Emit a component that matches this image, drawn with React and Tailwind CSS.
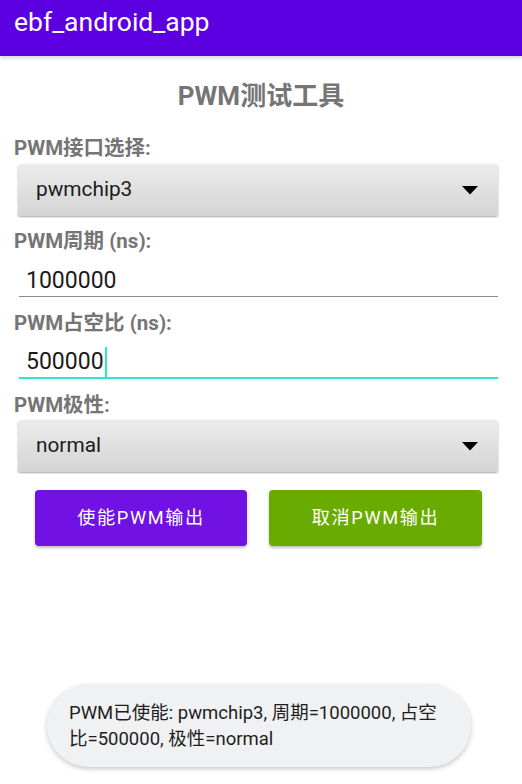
import React from "react";

const LATIN = "font-['Roboto','Noto_Sans_CJK_SC',sans-serif]";

function Label({ children, className = "" }) {
  return (
    <div
      className={`pl-[14px] text-[20.5px] leading-[28px] font-bold text-[#757575] ${className}`}
    >
      {children}
    </div>
  );
}

function Spinner({ value, className = "" }) {
  return (
    <div
      className={`mx-[18px] w-[480px] h-[52px] flex items-center justify-between rounded-[2px] bg-gradient-to-b from-[#ececec] to-[#d4d4d4] shadow-[0_1px_2px_rgba(0,0,0,0.35)] ${className}`}
    >
      <span className="pl-[18px] text-[20.8px] text-[#1b1b1b]">{value}</span>
      <svg width="16" height="9" viewBox="0 0 16 9" className="mr-[20px]">
        <polygon points="0,0 16,0 8,8.5" fill="#000" />
      </svg>
    </div>
  );
}

export default function App() {
  return (
    <div className={`relative w-[522px] h-[784px] bg-white overflow-hidden ${LATIN}`}>
      <div className="h-[56px] bg-[#5c00e1] flex items-center pl-[14px] shadow-[0_2px_4px_rgba(0,0,0,0.18)] relative z-10">
        <span className="text-white text-[26.5px] font-normal leading-none -mt-[12px]">
          ebf_android_app
        </span>
      </div>

      <div className="mt-[23px] h-[34px] text-center text-[26px] leading-[34px] font-bold text-[#757575]">
        PWM测试工具
      </div>

      <Label className="mt-[21px]">PWM接口选择:</Label>
      <Spinner value="pwmchip3" className="mt-[2px]" />

      <Label className="mt-[11px]">PWM周期 (ns):</Label>
      <div className="ml-[19px] w-[479px] pt-[11px] border-b border-[#8a8a8a]">
        <div className="pl-[7px] text-[23px] leading-[30px] text-[#1b1b1b]">1000000</div>
      </div>

      <Label className="mt-[12px]">PWM占空比 (ns):</Label>
      <div className="ml-[19px] w-[479px] pt-[10px] border-b-2 border-[#2ae8c9]">
        <div className="pl-[7px] text-[23px] leading-[30px] text-[#1b1b1b] flex items-center">
          <span>500000</span>
          <span className="inline-block w-[2px] h-[30px] bg-[#2ae8c9] ml-[1px]" />
        </div>
      </div>

      <Label className="mt-[12px]">PWM极性:</Label>
      <Spinner value="normal" className="mt-[1px]" />

      <div className="mt-[18px] mx-[35px] flex gap-[22px]">
        <button className="w-[212px] h-[56px] rounded-[4px] bg-[#7211e3] text-white text-[18.2px] font-normal tracking-[1.6px] shadow-[0_2px_3px_rgba(0,0,0,0.25)]">
          使能PWM输出
        </button>
        <button className="w-[213px] h-[56px] rounded-[4px] bg-[#6aab00] text-white text-[18.2px] font-normal tracking-[1.6px] shadow-[0_2px_3px_rgba(0,0,0,0.25)]">
          取消PWM输出
        </button>
      </div>

      <div className="absolute left-[47px] top-[684px] w-[424px] h-[83px] rounded-full bg-[#f0f1f2] shadow-[0_2px_5px_rgba(0,0,0,0.22)] flex flex-col justify-center pl-[22px] text-[18.5px] leading-[26px] text-[#1e1e1e]">
        <div>PWM已使能: pwmchip3, 周期=1000000, 占空</div>
        <div>比=500000, 极性=normal</div>
      </div>
    </div>
  );
}
